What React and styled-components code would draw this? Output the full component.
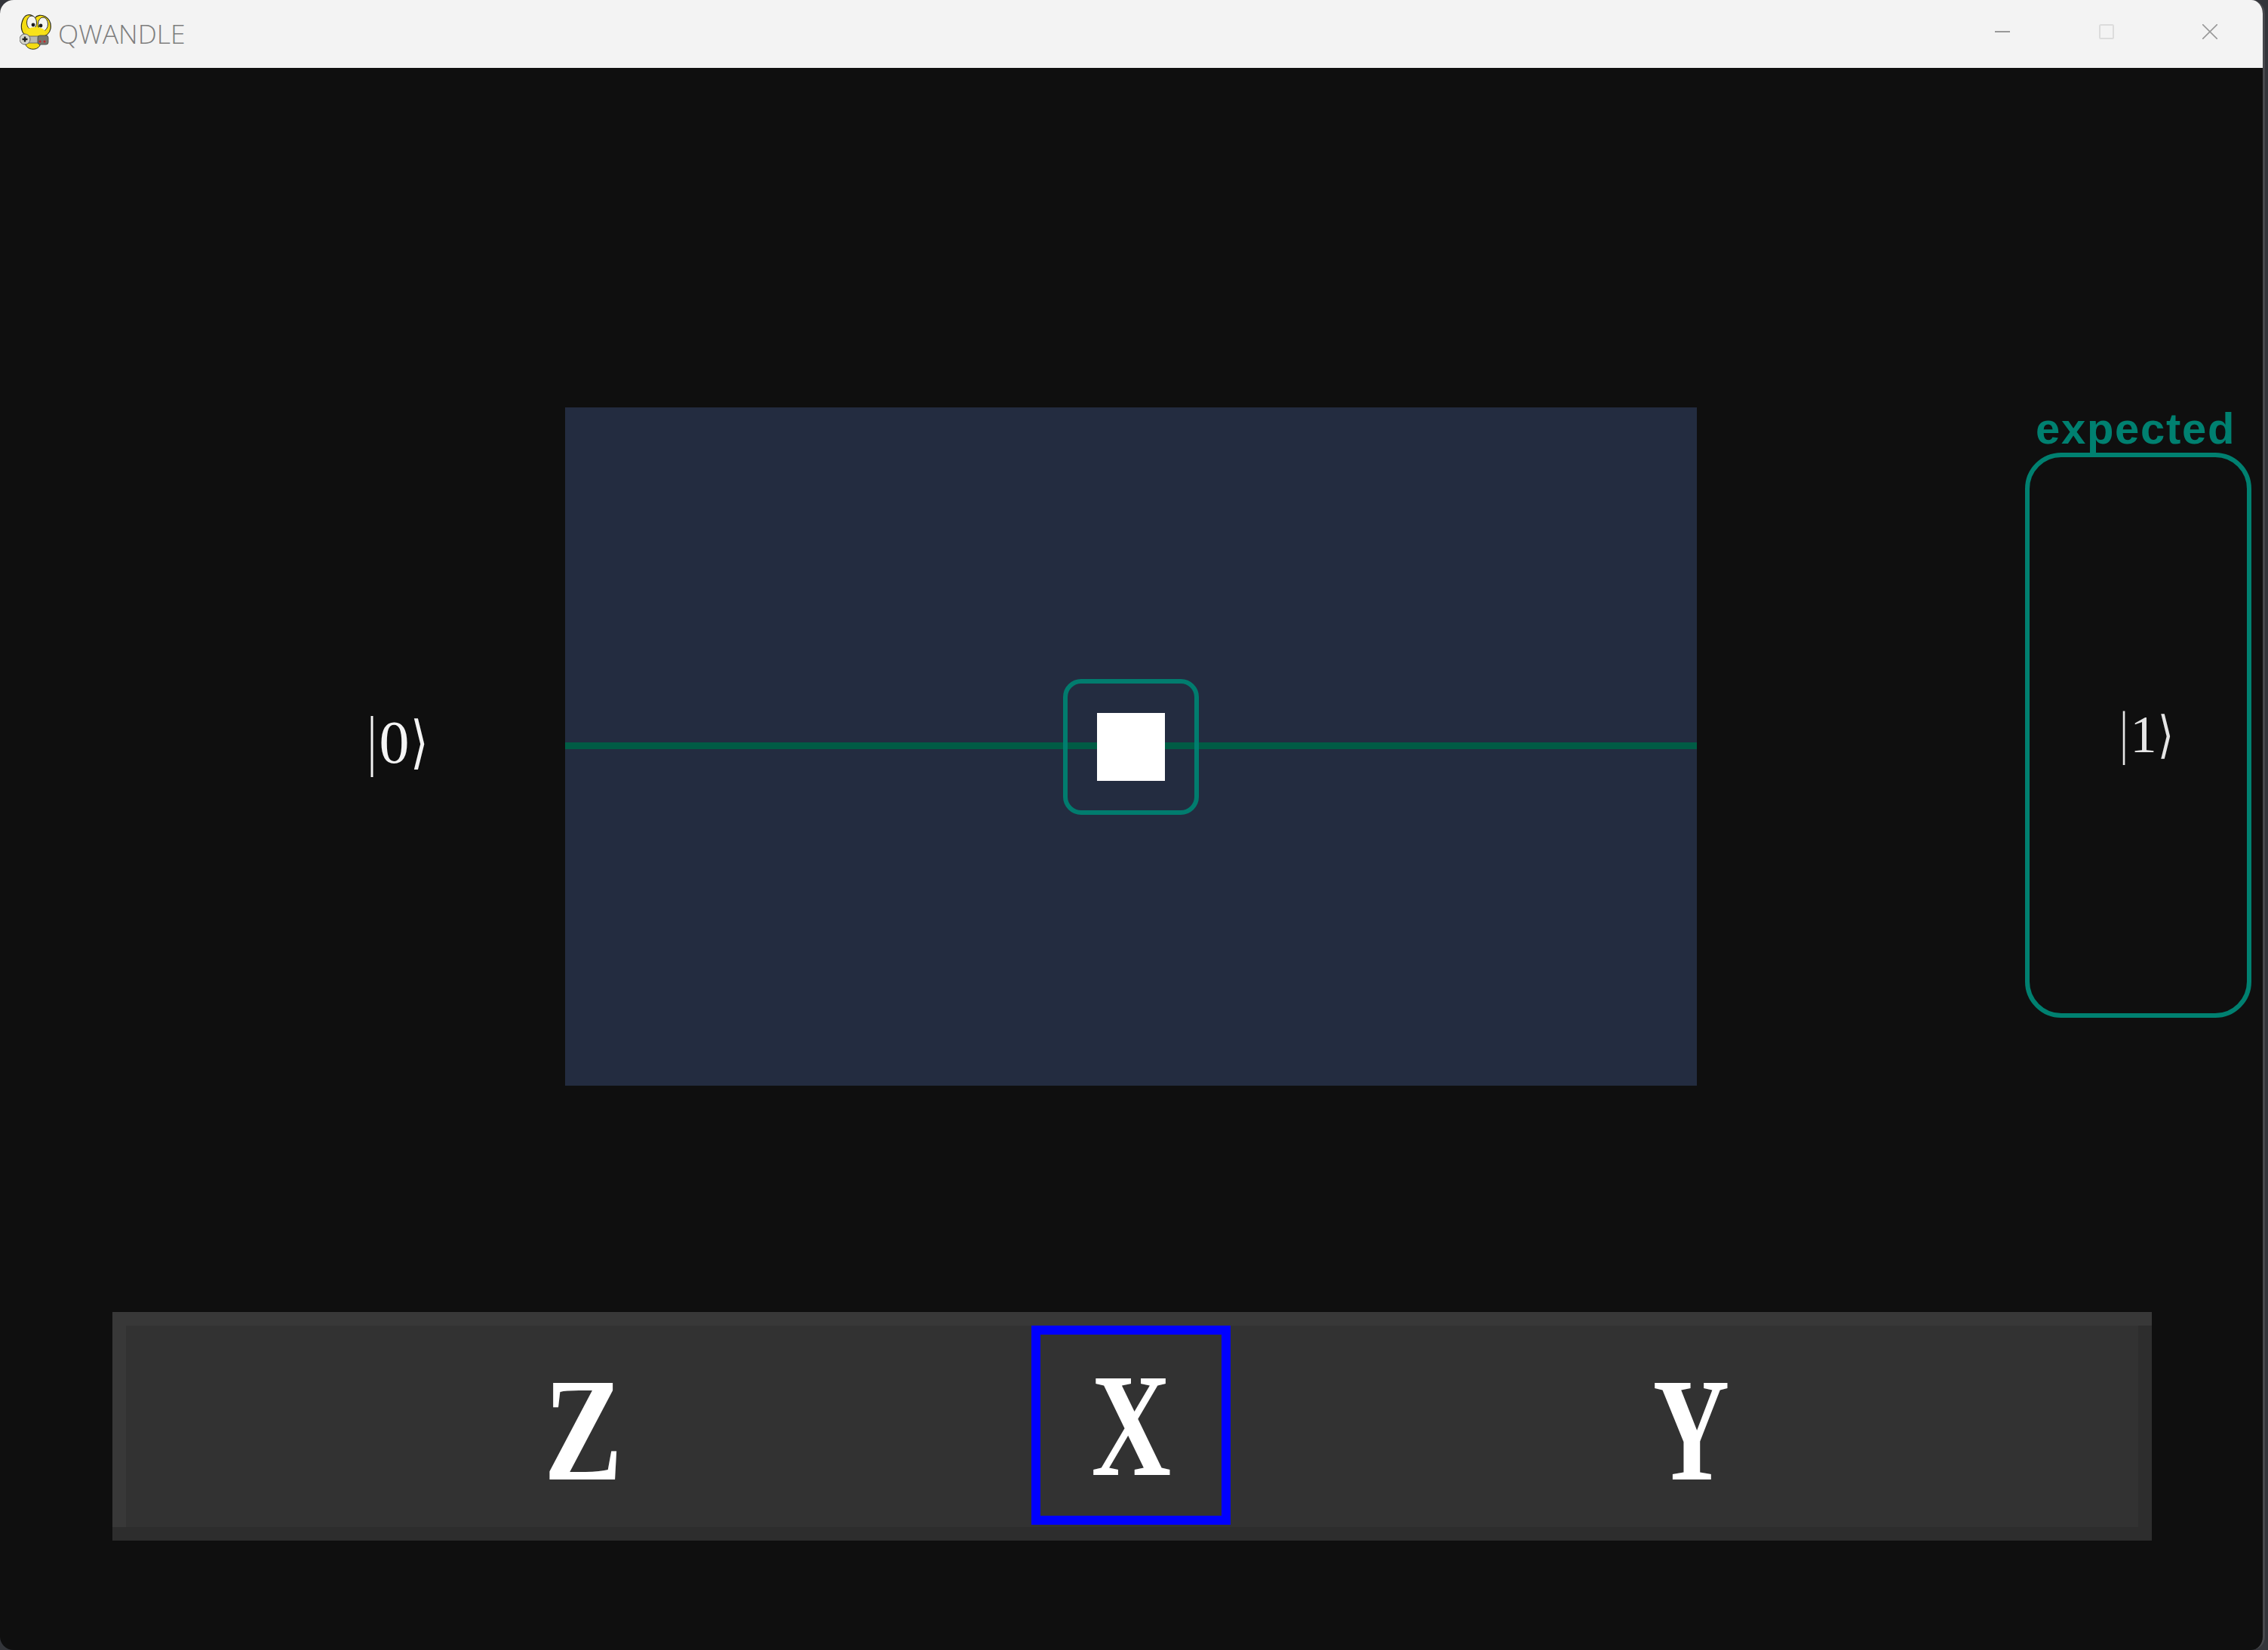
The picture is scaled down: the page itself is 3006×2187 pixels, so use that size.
import React from "react";
import styled, { createGlobalStyle } from "styled-components";

const GlobalStyle = createGlobalStyle`
  html, body {
    margin: 0;
    padding: 0;
    background: #33353a;
    overflow: hidden;
  }
  * {
    box-sizing: border-box;
  }
`;

const Desk = styled.div`
  width: 3006px;
  height: 2187px;
  background: #33353a;
`;
const Window = styled.div`
  width: 3002px;
  height: 2187px;
  background: #0f0f0f;
  border-right: 3px solid #47484c;
  border-radius: 18px;
  overflow: hidden;
  display: flex;
  flex-direction: column;
`;

const TitleBar = styled.div`
  height: 90px;
  flex: none;
  background: #f3f3f3;
  display: flex;
  align-items: center;
  padding: 0 0 4px 26px;
`;
const Title = styled.span`
  font-family: "Open Sans", "Liberation Sans", sans-serif;
  font-weight: 300;
  font-size: 35.5px;
  color: #7e7e7e;
  margin: 2px 0 0 9px;
`;
const Controls = styled.div`
  margin: 0 0 2px auto;
  padding-right: 1px;
  display: flex;
`;
const ControlButton = styled.div`
  width: 137.5px;
  display: flex;
  align-items: center;
  justify-content: center;
`;

const Stage = styled.div`
  flex: 1;
  display: flex;
  flex-direction: column;
  padding-top: 450px;
`;
const Board = styled.div`
  display: flex;
  height: 900px;
`;
const Start = styled.div`
  width: 749px;
  display: flex;
  align-items: center;
  padding: 0 0 12px 485px;
`;
const Field = styled.div`
  width: 1500px;
  height: 899px;
  background: #232c40;
  display: grid;
  place-items: center;
`;
const Wire = styled.div`
  grid-area: 1 / 1;
  width: 100%;
  height: 9px;
  margin-top: -2px;
  background: #005c45;
`;
const Gate = styled.div`
  grid-area: 1 / 1;
  width: 180px;
  height: 180px;
  margin-top: 1px;
  border: 6px solid rgba(0, 128, 112, 0.96);
  border-radius: 24px;
  display: flex;
  align-items: center;
  justify-content: center;
`;
const Qubit = styled.div`
  width: 90px;
  height: 90px;
  background: #ffffff;
`;

const Goal = styled.div`
  margin-left: 435px;
  width: 300px;
`;
const GoalLabel = styled.div`
  height: 60px;
  margin-top: -2px;
  padding-left: 14px;
  font-family: "Liberation Sans", Arial, sans-serif;
  font-weight: 700;
  font-size: 58px;
  line-height: 60px;
  letter-spacing: 1.7px;
  color: #008070;
  white-space: nowrap;
`;
const GoalBox = styled.div`
  width: 300px;
  height: 749px;
  margin-top: 2px;
  border: 6px solid #008070;
  border-radius: 48px;
  display: flex;
  align-items: center;
  padding: 0 0 0 118px;
`;

const Ket = styled.div`
  display: flex;
  align-items: center;
  height: ${props => props.$size * 1.02}px;
  color: ${props => props.$color};
  font-family: "Liberation Serif", "Times New Roman", serif;
  font-size: ${props => props.$size}px;
  line-height: 1;
  white-space: nowrap;
`;
const Pipe = styled.span`
  display: block;
  transform: translateY(-0.04em) scale(0.72, 1.12);
  width: 0.2em;
  margin-right: 0.02em;
`;
const Digit = styled.span`
  display: block;
  font-weight: 400;
`;
const Angle = styled.span`
  display: block;
  font-family: "DejaVu Sans", sans-serif;
  font-weight: 200;
  font-size: 0.95em;
  transform: scaleX(0.8);
  margin-left: -0.02em;
`;

const GatePicker = styled.div`
  margin: 299px 0 0 149px;
  width: 2703px;
  height: 303px;
  background: #323232;
  box-shadow:
    inset 0 -18px #2d2d2d,
    inset 0 18px #383838,
    inset 18px 0 #383838,
    inset -18px 0 #2d2d2d;
  display: flex;
  gap: 470px;
  padding: 18px 18px 18px 484px;
  align-items: flex-start;
`;
const Slot = styled.div`
  width: 264px;
  height: 264px;
  flex: none;
  border: 12px solid ${props => (props.$selected ? "#0000ff" : "transparent")};
  display: flex;
  align-items: center;
  justify-content: center;
`;
const Letter = styled.span`
  display: block;
  font-family: "Liberation Serif", "Times New Roman", serif;
  font-weight: 700;
  font-size: 195px;
  line-height: 1;
  color: #ffffff;
  transform: translate(${props => props.$dx}px, ${props => props.$dy}px) scaleX(${props => props.$sx});
`;

const SnakeIcon = () => (
  <svg width="42" height="48" viewBox="27 19 42 48">
    <path d="M30 40 C28 33 31 22 37 20 C41 19 45 21 47 24 C50 20 56 19 61 22 C66 25 69 31 68 38 C67 44 62 48 56 49 L42 49 C36 48 31 45 30 40 Z" fill="#f4dc12" stroke="#2a2a1a" strokeWidth="1.2" />
    <ellipse cx="43" cy="30" rx="6.5" ry="9" fill="#f5f5f0" stroke="#333" strokeWidth="1" />
    <ellipse cx="58" cy="32" rx="6.5" ry="9" fill="#f5f5f0" stroke="#333" strokeWidth="1" />
    <circle cx="45" cy="33" r="2.4" fill="#1c1c1c" />
    <circle cx="55" cy="34" r="2.4" fill="#1c1c1c" />
    <circle cx="52" cy="35" r="1.4" fill="#6a6a20" />
    <ellipse cx="48" cy="43" rx="13" ry="7" fill="#f8e21a" />
    <path d="M35 59 C37 66 50 68 54 60 L54 56 L35 56 Z" fill="#f4dc12" stroke="#2a2a1a" strokeWidth="1" />
    <rect x="33" y="48" width="28" height="9" rx="2" fill="#b8b8b0" stroke="#555" strokeWidth="0.8" />
    <circle cx="34" cy="52" r="7" fill="#d6d6cc" stroke="#666" strokeWidth="1" />
    <rect x="30.5" y="50.8" width="7" height="2.4" fill="#222" />
    <rect x="32.8" y="48.5" width="2.4" height="7" fill="#222" />
    <rect x="51" y="47" width="14" height="12" rx="3" fill="#77776f" stroke="#444" strokeWidth="0.8" />
    <circle cx="54" cy="55" r="1.5" fill="#c8242c" />
    <circle cx="60" cy="55" r="1.5" fill="#c8242c" />
  </svg>
);

const MinimiseIcon = () => (
  <svg width="20" height="20" viewBox="0 0 20 20">
    <rect x="0" y="9" width="20" height="2" fill="#999999" />
  </svg>
);
const MaximiseIcon = () => (
  <svg width="20" height="20" viewBox="0 0 20 20">
    <rect x="1" y="1" width="18" height="18" rx="1.5" fill="none" stroke="#dcdcdc" strokeWidth="2" />
  </svg>
);
const CloseIcon = () => (
  <svg width="20" height="20" viewBox="0 0 20 20">
    <path d="M0 0 L20 20 M20 0 L0 20" stroke="#999999" strokeWidth="1.6" />
  </svg>
);

const App = () => (
  <Desk>
    <GlobalStyle />
    <Window>
      <TitleBar>
        <SnakeIcon />
        <Title>QWANDLE</Title>
        <Controls>
          <ControlButton><MinimiseIcon /></ControlButton>
          <ControlButton><MaximiseIcon /></ControlButton>
          <ControlButton><CloseIcon /></ControlButton>
        </Controls>
      </TitleBar>
      <Stage>
        <Board>
          <Start>
            <Ket $size={80} $color="#f4f4f4">
              <Pipe>|</Pipe><Digit>0</Digit><Angle>⟩</Angle>
            </Ket>
          </Start>
          <Field>
            <Wire />
            <Gate><Qubit /></Gate>
          </Field>
          <Goal>
            <GoalLabel>expected</GoalLabel>
            <GoalBox>
              <Ket $size={70} $color="#e6e6e6">
                <Pipe>|</Pipe><Digit>1</Digit><Angle>⟩</Angle>
              </Ket>
            </GoalBox>
          </Goal>
        </Board>
        <GatePicker>
          <Slot><Letter $dx={8} $dy={6} $sx={0.8}>Z</Letter></Slot>
          <Slot $selected><Letter $dx={0} $dy={0} $sx={0.75}>X</Letter></Slot>
          <Slot><Letter $dx={8} $dy={6} $sx={0.72}>Y</Letter></Slot>
        </GatePicker>
      </Stage>
    </Window>
  </Desk>
);

export default App;
